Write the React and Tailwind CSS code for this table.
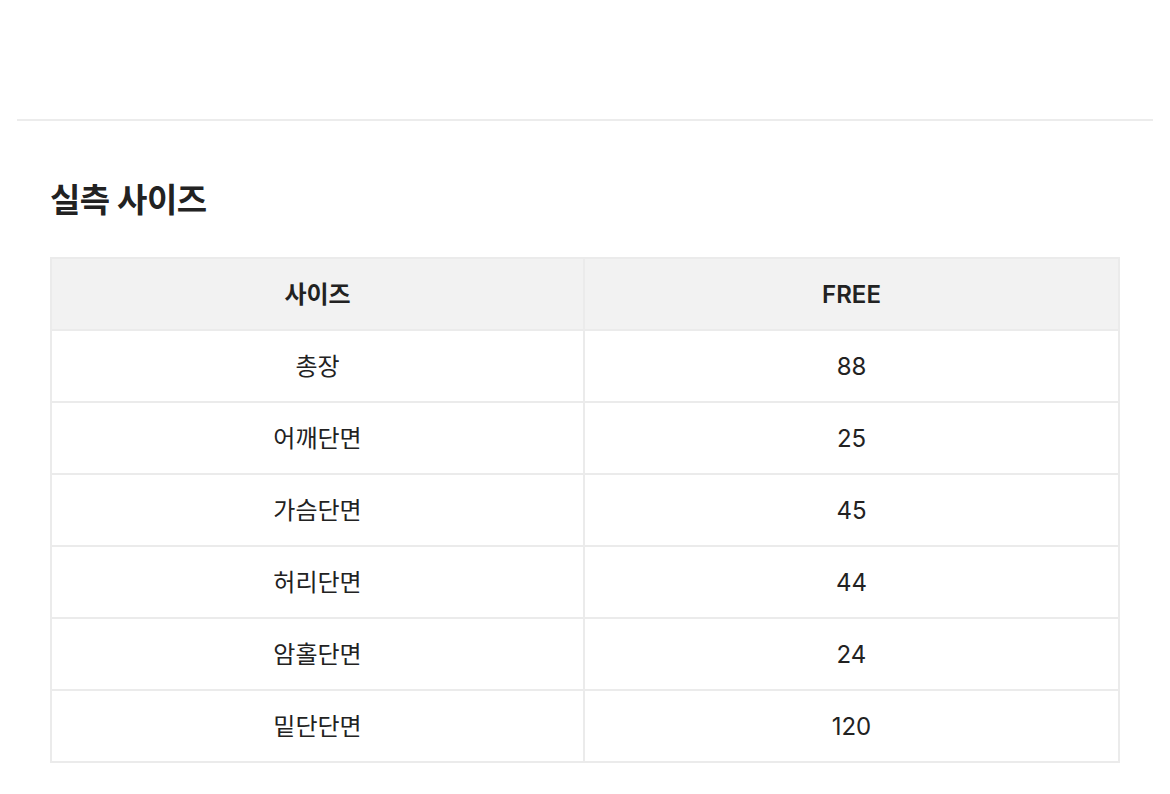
export default function App() {
  const rows = [
    ["총장", "88"],
    ["어깨단면", "25"],
    ["가슴단면", "45"],
    ["허리단면", "44"],
    ["암홀단면", "24"],
    ["밑단단면", "120"],
  ];
  return (
    <div
      className="w-[1170px] h-[794px] bg-white text-[#222]"
      style={{ fontFamily: 'Inter, "Noto Sans CJK KR", sans-serif' }}
    >
      <div className="px-[17px] pt-[119px]">
        <div className="h-[2px] bg-[#ececec]" />
        <div className="px-[33px]">
          <h2 className="mt-[59px] text-[33px] leading-[40px] font-bold tracking-[-0.5px] text-[#222]">
            실측 사이즈
          </h2>
          <table className="mt-[37px] w-[1070px] border-collapse table-fixed">
            <thead>
              <tr className="bg-[#f2f2f2]">
                <th className="w-[533px] h-[72px] pt-[2px] border-2 border-[#ebebeb] text-[24px] font-semibold text-center">
                  사이즈
                </th>
                <th className="h-[72px] pt-[2px] border-2 border-[#ebebeb] text-[24px] font-semibold text-center">
                  FREE
                </th>
              </tr>
            </thead>
            <tbody>
              {rows.map(([a, b]) => (
                <tr key={a}>
                  <td className="h-[72px] pt-[2px] border-2 border-[#ebebeb] text-[24px] text-center">
                    {a}
                  </td>
                  <td className="h-[72px] pt-[2px] border-2 border-[#ebebeb] text-[24px] text-center">
                    {b}
                  </td>
                </tr>
              ))}
            </tbody>
          </table>
        </div>
      </div>
    </div>
  );
}
